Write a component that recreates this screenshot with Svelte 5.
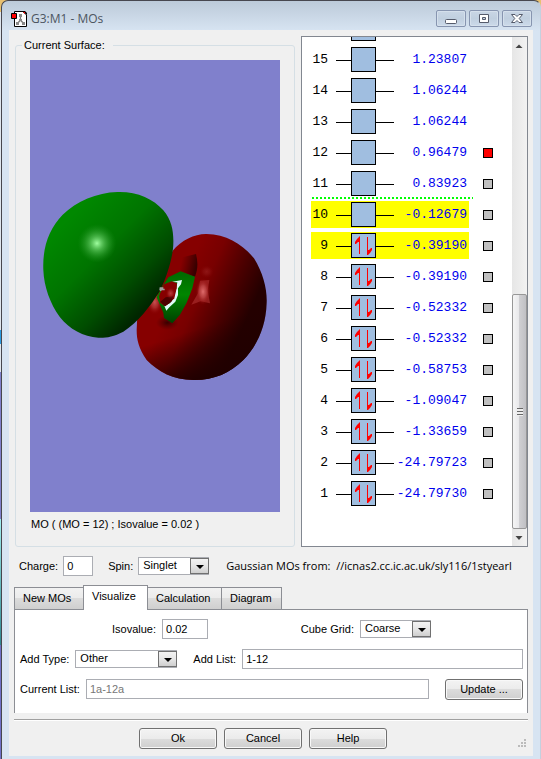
<script>
  const rows = [
    ['', ''], [15, '1.23807'], [14, '1.06244'], [13, '1.06244'], [12, '0.96479'],
    [11, '0.83923'], [10, '-0.12679'], [9, '-0.39190'], [8, '-0.39190'],
    [7, '-0.52332'], [6, '-0.52332'], [5, '-0.58753'], [4, '-1.09047'],
    [3, '-1.33659'], [2, '-24.79723'], [1, '-24.79730']
  ].map(([n, energy]) => ({ n, energy }));
  const tabs = ['New MOs', 'Visualize', 'Calculation', 'Diagram'];
  let active = $state('Visualize');
  let charge = $state('0');
  let isovalue = $state('0.02');
  let addList = $state('1-12');
</script>

<div class="desktop">
  <main class="window">
    <header class="titlebar">
      <svg class="app-icon" width="16" height="16" viewBox="0 0 16 16" aria-hidden="true">
        <path d="M3.500.5H12L15.500 4v11.500H3.500z" fill="#fff" stroke="#000" />
        <path d="M12 0h2l2 2v2l-1-1-3-2z" fill="#000" />
        <path d="M12 1l2 2v-2z" fill="#f00" />
        <path d="M9.500 4.500V9l-3 3.500M9.500 9l3 3.500" fill="none" stroke="#777" stroke-width="1.300" />
        <path d="M8 3h3v3H8zM5 11h3v3H5zM11 11h3v3h-3zM8 8h3v2H8z" fill="#888" />
        <path d="M.5 2.500h5v5h-5z" fill="#f00" stroke="#000" />
      </svg>
      <h1>G3:M1 - MOs</h1>
      <div class="caption-buttons">
        <button aria-label="Minimize">
          <svg width="12" height="13" viewBox="0 0 12 13"><rect x=".5" y="7.500" width="11" height="4" rx="1" fill="#fff" stroke="#555b6b" /></svg>
        </button>
        <button aria-label="Maximize">
          <svg width="12" height="13" viewBox="0 0 12 13"><path d="M1.500 2.500h9v8h-9z" fill="#fff" stroke="#555b6b" /><path d="M4.500 5.500h3v2h-3z" fill="#c5d2e0" stroke="#555b6b" /></svg>
        </button>
        <button aria-label="Close">
          <svg width="12" height="13" viewBox="0 0 12 13"><path d="M.5 2.500h3.500L6 4.500l2-2h3.500L8.200 6.500l3.300 4H8l-2-2-2 2H.5l3.300-4z" fill="#fff" stroke="#555b6b" /></svg>
        </button>
      </div>
    </header>

    <div class="client">
      <div class="top">
        <fieldset>
          <legend>Current Surface:</legend>
          <svg class="surface" viewBox="0 0 250 452" role="img" aria-label="Molecular orbital surface">
            <defs>
              <linearGradient id="green" gradientUnits="userSpaceOnUse" x1="120" y1="110" x2="370" y2="360">
                <stop offset="0" stop-color="#008800" /><stop offset=".4" stop-color="#007400" />
                <stop offset=".75" stop-color="#004c00" /><stop offset="1" stop-color="#002600" />
              </linearGradient>
              <linearGradient id="red" gradientUnits="userSpaceOnUse" x1="460" y1="290" x2="665" y2="385">
                <stop offset="0" stop-color="#860000" /><stop offset=".3" stop-color="#780000" />
                <stop offset=".65" stop-color="#4c0000" /><stop offset="1" stop-color="#240000" />
              </linearGradient>
              <linearGradient id="low" gradientUnits="userSpaceOnUse" x1="460" y1="460" x2="505" y2="600">
                <stop offset="0" stop-color="#200000" stop-opacity="0" /><stop offset="1" stop-color="#200000" />
              </linearGradient>
              <radialGradient id="shine"><stop offset="0" stop-color="#a0ffa0" /><stop offset=".35" stop-color="#60c860" stop-opacity=".75" /><stop offset="1" stop-color="#209020" stop-opacity="0" /></radialGradient>
              <radialGradient id="glow"><stop offset="0" stop-color="#e06c6c" /><stop offset=".45" stop-color="#c04848" stop-opacity=".75" /><stop offset="1" stop-color="#900000" stop-opacity="0" /></radialGradient>
              <radialGradient id="fold"><stop offset="0" stop-color="#300000" stop-opacity=".9" /><stop offset="1" stop-color="#500000" stop-opacity="0" /></radialGradient>
              <linearGradient id="rim" x1="0" y1="0" x2="0" y2="1"><stop offset="0" stop-color="#006800" /><stop offset=".45" stop-color="#008600" /><stop offset="1" stop-color="#004000" /></linearGradient>
              <linearGradient id="crease" gradientUnits="userSpaceOnUse" x1="455" y1="240" x2="500" y2="250"><stop offset="0" stop-color="#400000" stop-opacity="0" /><stop offset="1" stop-color="#380000" /></linearGradient>
              <path id="ring" d="M428 212C455 180 495 161 530 162C590 162 640 195 672 235C700 280 712 330 710 370C708 440 680 500 640 540C600 580 550 601 490 600C430 600 385 575 350 540C326 505 320 480 320 450L322 405L390 300Z" />
            </defs>
            <rect width="250" height="452" fill="#8080cc" />
            <g transform="translate(0 120) scale(.33333)">
              <use href="#ring" fill="url(#red)" />
              <use href="#ring" fill="url(#low)" />
              <path d="M498 222C504 245 504 268 495 290L450 275L445 235Z" fill="url(#crease)" />
              <ellipse cx="412" cy="428" rx="34" ry="22" fill="url(#fold)" />
              <ellipse cx="374" cy="366" rx="24" ry="38" fill="url(#glow)" opacity=".75" />
              <ellipse cx="530" cy="275" rx="22" ry="20" fill="url(#glow)" opacity=".2" />
              <path d="M510 302L538 300L533 332L540 370L512 364L484 374L504 340Z" fill="#b43636" opacity=".55" />
              <ellipse cx="519" cy="335" rx="22" ry="40" fill="url(#glow)" />
              <path d="M380 352L400 315L415 292L452 274L495 290L487 325L470 368L450 404L427 430L402 414L400 398Z" fill="url(#rim)" />
              <path d="M420 307L456 300L453 313L444 325L444 345L436 365L418 382L409 392L403 377L419 370L430 356L439 325L442 307Z" fill="#dffaf8" />
              <path d="M402 313L425 304L441 310L440 325L433 355L420 368L405 379L391 369L387 348Z" fill="#860000" />
              <path d="M391 365L407 352L430 349L424 365L405 379Z" fill="#4c0000" />
              <ellipse cx="422" cy="340" rx="15" ry="18" fill="url(#glow)" opacity=".55" />
              <path d="M262 36C320 34 370 56 400 91C426 122 431 155 430 190C430 225 412 290 388 335C360 380 325 425 280 455C250 471 225 474 205 473C160 470 118 448 90 412C60 370 42 320 40 270C37 200 58 145 98 104C140 64 200 38 262 36Z" fill="url(#green)" />
              <ellipse cx="201" cy="190" rx="58" ry="58" fill="url(#shine)" />
              <path d="M389 322h11v4h4v5h-8l-4 3-4-4z" fill="#a0a0a0" />
            </g>
          </svg>
          <p class="surface-caption">MO ( (MO = 12) ; Isovalue = 0.02 )</p>
        </fieldset>

        <section class="levels" aria-label="Orbital energies">
          <div class="level-list">
            {#each rows as { n, energy }}
              <div class="level" class:homo-edge={n === 10}>
                <div class="orbital" class:picked={n === 10 || n === 9}>
                  <span class="number">{n}</span>
                  <svg width="58" height="26" viewBox="0 0 58 26" aria-hidden="true">
                    <path d="M0 13.500h58" stroke="#000" />
                    <rect x="15.500" y=".5" width="24" height="24" fill="#a0bee0" stroke="#000" />
                    {#if n && n < 10}
                      <path d="M23.500 4v17M31.500 4v17" stroke="#f00" />
                      <path d="M24 3v6h-2l-2 2h-1V9l2-3 2-2zM31 22v-7l1 2h1l2-2h1v2l-2 3-2 2z" fill="#f00" />
                    {/if}
                  </svg>
                  <span class="energy">{energy}</span>
                </div>
                {#if n && n < 13}<span class="mark" class:current={n === 12}></span>{/if}
              </div>
            {/each}
          </div>
          <div class="scrollbar" aria-hidden="true">
            <svg width="15" height="17" viewBox="0 0 15 17"><path d="M3.500 11L7 7.500l3.500 3.500z" fill="#444" /></svg>
            <div class="track"><div class="thumb"><i></i></div></div>
            <svg width="15" height="17" viewBox="0 0 15 17"><path d="M3.500 7h7L7 11z" fill="#444" /></svg>
          </div>
        </section>
      </div>

      <div class="row molecule">
        <label for="charge">Charge:</label>
        <input id="charge" class="tiny" bind:value={charge} />
        <label for="spin" class="next">Spin:</label>
        <span class="combo"><select id="spin"><option>Singlet</option><option>Triplet</option></select></span>
        <span class="source">Gaussian MOs from:&nbsp; //icnas2.cc.ic.ac.uk/sly116/1styearl</span>
      </div>

      <div class="tabs" role="tablist">
        {#each tabs as tab}
          <button role="tab" aria-selected={active === tab} class:active={active === tab} onclick={() => (active = tab)}>{tab}</button>
        {/each}
      </div>
      <div class="pane" role="tabpanel">
        <div class="row">
          <label for="iso" class="iso">Isovalue:</label>
          <input id="iso" class="short" bind:value={isovalue} />
          <label for="grid" class="cube">Cube Grid:</label>
          <span class="combo grid-choice"><select id="grid"><option>Coarse</option><option>Medium</option><option>Fine</option></select></span>
        </div>
        <div class="row">
          <label for="type">Add Type:</label>
          <span class="combo wide"><select id="type"><option>Other</option></select></span>
          <label for="list" class="next">Add List:</label>
          <input id="list" class="grow" bind:value={addList} />
        </div>
        <div class="row">
          <label for="current">Current List:</label>
          <input id="current" class="grow" value="1a-12a" disabled />
          <button class="push update">Update ...</button>
        </div>
      </div>

      <footer>
        <button class="push">Ok</button>
        <button class="push">Cancel</button>
        <button class="push">Help</button>
        <svg class="grip" width="9" height="9" viewBox="0 0 9 9" aria-hidden="true"><path d="M6 0h2v2H6zM3 3h2v2H3zM6 3h2v2H6zM0 6h2v2H0zM3 6h2v2H3zM6 6h2v2H6z" fill="#bbb" /></svg>
      </footer>
    </div>
  </main>
</div>

<style>
  :global(body) { margin: 0; }
  .desktop {
    min-height: 100vh;
    box-sizing: border-box;
    padding-left: 1px;
    display: flex;
    background: linear-gradient(#e8c070 0 12px, #dfe6ee 12px 330px, #2a9be0 330px 344px, #dfe6ee 344px 372px, #8080cc 372px 519px, #a0f0f0 519px, #308890 645px, #7070c8 645px);
  }
  .window, .window * { box-sizing: border-box; }
  .window {
    flex: 1;
    min-width: 0;
    display: flex;
    flex-direction: column;
    padding: 0 7px 3px;
    border: solid #47474f;
    border-width: 1px 1px 0 1px;
    border-right-color: #c4d0de;
    border-radius: 7px 7px 0 0;
    background: linear-gradient(#bccad9, #d7e4f2 30px);
    color: #000;
    font: 11px/14px "Liberation Sans", Arial, sans-serif;
  }
  button, input, select { font: inherit; color: inherit; }
  .titlebar { height: 29px; display: flex; align-items: center; padding: 6px 1px 0 2px; }
  h1 { flex: 1; margin: 0 0 0 4px; font: 12px/16px "Open Sans", "Noto Sans", sans-serif; color: #4c5561; }
  .caption-buttons { display: flex; gap: 3px; align-items: center; }
  .caption-buttons button {
    width: 30px; height: 17px; padding: 0; display: grid; place-items: center;
    background: linear-gradient(#c9d6e5, #c0cfdf 50%, #ccdaea);
    border: 1px solid #8795b0; border-radius: 2px;
    box-shadow: inset 0 0 0 1px #d5e0ec;
  }
  .client { flex: 1; min-width: 0; background: #f0f0f0; padding: 6px 5px 0; display: flex; flex-direction: column; }
  .top { display: flex; gap: 6px; padding-left: 1px; }
  fieldset {
    flex: 1; min-width: 0; margin: 2px 0 0; padding: 8px 14px 15px;
    border: 1px solid #d5dfe5; border-radius: 3px;
  }
  legend { padding: 0 8px 0 2px; margin-left: -8px; }
  .surface { display: block; width: 100%; height: auto; }
  .surface-caption { margin: 5px 0 0 1px; }
  .levels {
    contain: size; width: 227px; flex: none; display: flex;
    background: #fff; border: 1px solid #828790;
  }
  .level-list {
    flex: 1; min-width: 0; overflow: hidden; padding: 0 0 37px 9px;
    display: flex; flex-direction: column; justify-content: flex-end;
  }
  .level { flex: none; height: 31px; display: flex; align-items: center; gap: 14px; position: relative; }
  .homo-edge::before {
    content: ""; position: absolute; left: 1px; top: -2px; width: 161px; height: 2px;
    background: repeating-linear-gradient(90deg, #0f0 0 2px, transparent 2px 4px);
  }
  .orbital { width: 158px; height: 27px; padding-right: 2px; display: flex; align-items: center; font: 13px/16px "Liberation Mono", "Courier New", monospace; }
  .orbital svg { flex: none; }
  .picked { background: #ff0; }
  .number { width: 17px; margin-right: 8px; text-align: right; }
  .energy { flex: 1; text-align: right; color: #00e; }
  .mark { width: 10px; height: 10px; border: 1px solid #000; background: #c0c0c0; }
  .mark.current { background: #f00; }
  .scrollbar { width: 15px; display: flex; flex-direction: column; background: linear-gradient(90deg, #e6e6e6, #f2f2f2); }
  .track { flex: 1; display: flex; flex-direction: column; justify-content: flex-end; }
  .thumb {
    height: 235px; display: grid; place-items: center; border: 1px solid #979797; border-radius: 2px;
    background: linear-gradient(90deg, #f5f5f5, #e9e9eb 45%, #cfcfd2 50%, #c0c0c4);
  }
  .thumb i { width: 6px; height: 8px; background: repeating-linear-gradient(#666 0 1px, #eee 1px 3px); }

  .row { display: flex; align-items: center; height: 20px; gap: 6px; white-space: nowrap; }
  .molecule { margin: 9px 0 0; padding: 0 5px; gap: 5px; }
  .next { margin-left: 10px; }
  .source { flex: 1; min-width: 0; margin-left: 12px; font: 11px/16px "Open Sans", "Noto Sans", sans-serif; }
  input { height: 20px; min-width: 0; margin: 0; padding: 0 3px; border: 1px solid #abadb3; border-radius: 0; background: #fff; }
  input:disabled { color: #777; }
  .tiny { width: 30px; }
  .short { width: 46px; }
  .grow { flex: 1; }
  .combo { position: relative; display: flex; width: 71px; height: 18px; }
  .wide { width: 102px; }
  .combo select {
    appearance: none; width: 100%; margin: 0; padding: 0 18px 2px 4px;
    border: 1px solid #abadb3; border-radius: 0; background: #fff;
  }
  .combo::before {
    content: ""; position: absolute; right: 0; top: 1px; bottom: 1px; width: 17px; pointer-events: none;
    border: 1px solid #707070; background: linear-gradient(#f3f3f3, #e6e6e6 50%, #cfcfcf);
  }
  .combo::after {
    content: ""; position: absolute; right: 5px; top: 8px; pointer-events: none;
    border: 4px solid transparent; border-top-color: #000; border-bottom: 0;
  }
  .tabs { display: flex; align-items: flex-end; height: 24px; margin-top: 9px; padding-left: 1px; position: relative; }
  .tabs button {
    height: 22px; padding: 0 8px 2px; border: 1px solid #8c8e94; border-bottom: 0; margin-left: -1px;
    background: linear-gradient(#f2f2f2, #ebebeb 50%, #dcdcdc 50%, #cfcfcf); text-align: left;
  }
  .tabs button { width: 70px; }
  .tabs button:nth-child(2) { width: 65px; }
  .tabs button:nth-child(3) { width: 75px; }
  .tabs button:nth-child(4) { width: 61px; }
  .tabs button.active { height: 25px; margin-bottom: -1px; padding-bottom: 4px; background: #fff; }
  .pane {
    display: flex; flex-direction: column; gap: 10px; padding: 9px 4px 14px 5px;
    border: 1px solid #8c8e94; border-bottom: 0; background: #fff;
  }
  .iso { margin-left: 92px; }
  .cube { margin-left: auto; }
  .grid-choice { margin-right: 92px; }
  .push {
    width: 78px; height: 21px; padding: 0 0 1px; border: 1px solid #707070; border-radius: 3px;
    background: linear-gradient(#f3f3f3, #ebebeb 50%, #dcdcdc 50%, #cfcfcf);
    box-shadow: inset 0 0 0 1px #f8f8f8;
  }
  .update { margin-left: 10px; }
  footer {
    flex: 1; display: flex; justify-content: center; align-items: flex-start; gap: 7px;
    margin-top: 6px; padding: 8px 16px 6px 0; border-top: 1px solid #a0a0a0; box-shadow: inset 0 1px #fff; position: relative;
  }
  .grip { position: absolute; right: 1px; bottom: 8px; }
</style>
